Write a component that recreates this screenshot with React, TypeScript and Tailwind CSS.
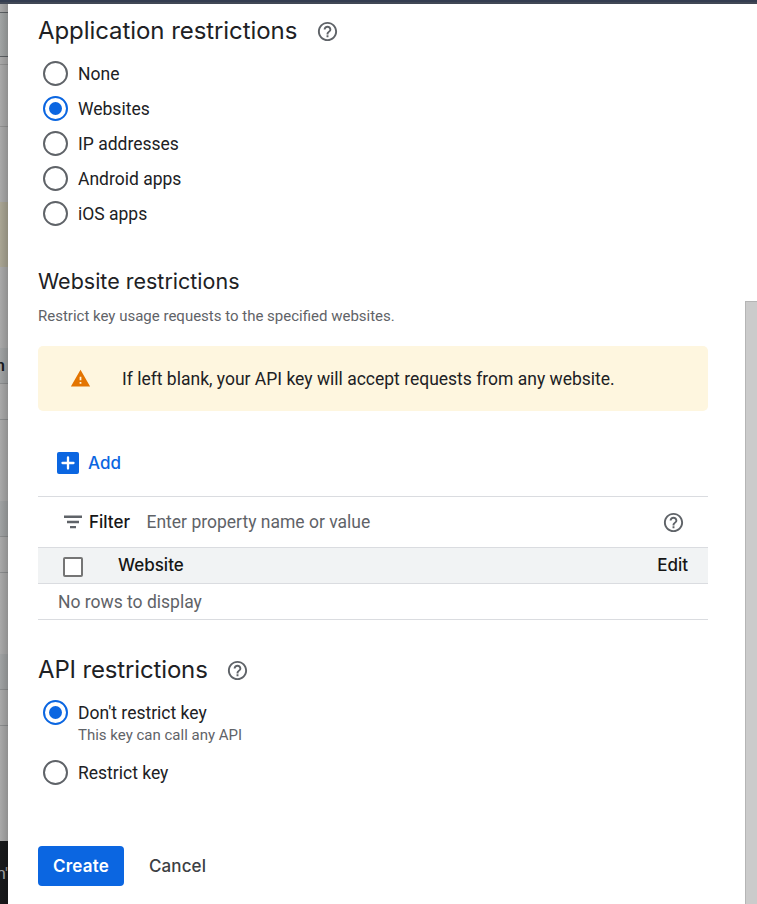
import React from "react";

const display = "font-['Google_Sans',Inter,sans-serif]";

function HelpIcon() {
  return (
    <svg viewBox="0 0 24 24" className="size-[23px] shrink-0 fill-[#5f6368]">
      <path d="M11 18h2v-2h-2v2zm1-16C6.48 2 2 6.48 2 12s4.48 10 10 10 10-4.48 10-10S17.52 2 12 2zm0 18c-4.41 0-8-3.59-8-8s3.59-8 8-8 8 3.59 8 8-3.59 8-8 8zm0-14c-2.21 0-4 1.79-4 4h2c0-1.1.9-2 2-2s2 .9 2 2c0 2-3 1.75-3 5h2c0-2.25 3-2.5 3-5 0-2.21-1.79-4-4-4z" />
    </svg>
  );
}

function Radio({ label, checked = false }: { label: string; checked?: boolean }) {
  return (
    <div className="flex h-[35px] items-center pl-[5px]" role="radio" aria-checked={checked}>
      <span
        className={`flex size-[25px] shrink-0 items-center justify-center rounded-full border-2 ${
          checked ? "border-[#0b66e1]" : "border-[#5f6368]"
        }`}
      >
        {checked && <span className="size-[13px] rounded-full bg-[#0b66e1]" />}
      </span>
      <span className="ml-[10px] pt-[2px] text-[17.5px] leading-none whitespace-nowrap">{label}</span>
    </div>
  );
}

const strip: [number, string][] = [
  [8, "#a9a9a9"], [1, "#5c6063"], [43, "#a1a4a4"], [1, "#5c6063"],
  [7, "#a9a9a9"], [1, "#929292"], [61, "#a9a9a9"], [1, "#929292"], [75, "#a9a9a9"],
  [65, "#a9a593"], [81, "#a9a9a9"], [35, "#9fa2a3"], [1, "#8b8d8e"], [35, "#a9a9a9"],
  [1, "#8b8d8e"], [81, "#a9a9a9"], [35, "#9fa2a3"], [1, "#8b8d8e"], [35, "#a9a9a9"],
  [1, "#8b8d8e"], [81, "#a9a9a9"], [35, "#9fa2a3"], [1, "#8b8d8e"], [35, "#a9a9a9"],
  [1, "#8b8d8e"], [115, "#a9a9a9"], [63, "#18191b"],
];

function Backdrop() {
  return (
    <div className="relative flex w-2 shrink-0 flex-col overflow-hidden">
      {strip.map(([height, backgroundColor], i) => (
        <div key={i} className="flex shrink-0 items-center justify-end" style={{ height, backgroundColor }}>
          {i === 11 && <span className="mr-[3px] text-[17px] font-medium text-[#15181c]">n</span>}
          {i === 26 && <span className="pt-[3px] text-[17px] text-[#a5a5a5]">n'</span>}
        </div>
      ))}
      <div className="absolute inset-0 bg-linear-to-r from-transparent to-black/15" />
    </div>
  );
}

export default function App() {
  return (
    <div className="flex h-[904px] w-[757px] flex-col overflow-hidden bg-white font-[Roboto,sans-serif] text-[#202124]">
      <div className="h-1 shrink-0 border-b-2 border-[#414855] bg-[#343d50]" />
      <div className="flex min-h-0 flex-1">
        <Backdrop />
        <main className="flex w-[737px] shrink-0 flex-col pl-[30px]">
          <div className="flex h-[52px] items-center gap-[18.5px] pt-[2px]">
            <h1 className={`${display} w-[259px] text-[24px] tracking-[-0.07px] whitespace-nowrap`}>Application restrictions</h1>
            <HelpIcon />
          </div>
          <div role="radiogroup">
            <Radio label="None" />
            <Radio label="Websites" checked />
            <Radio label="IP addresses" />
            <Radio label="Android apps" />
            <Radio label="iOS apps" />
          </div>

          <h2 className={`${display} mt-[35px] h-[30px] text-[21.5px] leading-[30px]`}>Website restrictions</h2>
          <p className="mt-[10px] h-5 text-[15px] leading-5 text-[#5f6368]">
            Restrict key usage requests to the specified websites.
          </p>
          <div className="mt-5 flex h-[65px] w-[670px] shrink-0 items-center rounded-[5px] bg-[#fef6df] pl-8">
            <svg viewBox="0 0 24 24" className="size-[21px] fill-[#e37400]">
              <path d="M1 21h22L12 2 1 21zm12-3h-2v-2h2v2zm0-4h-2v-4h2v4z" />
            </svg>
            <span className="ml-[31px] pt-[2px] text-[17.5px] whitespace-nowrap">
              If left blank, your API key will accept requests from any website.
            </span>
          </div>

          <button className={`${display} mt-[35px] flex h-[34px] items-center self-start pl-[19px] text-[17px] font-medium text-[#0b66e1]`}>
            <svg viewBox="0 0 22 22" className="size-[22px]">
              <rect width="22" height="22" rx="2" fill="#0b66e1" />
              <path d="M11 5.5v11M5.5 11h11" stroke="white" strokeWidth="2.3" strokeLinecap="round" />
            </svg>
            <span className="ml-[9px] pt-[2px]">Add</span>
          </button>

          <section className="mt-4 w-[670px] border-y border-[#dadce0]">
            <div className="flex h-[50px] items-center pl-[23px]">
              <svg viewBox="0 0 24 24" className="size-6 fill-[#5f6368]">
                <path d="M3 5.5h18V8H3zM6 10.8h12v2.4H6zM9 16h6v2.3H9z" />
              </svg>
              <span className={`${display} ml-1 w-[57.5px] pt-[2px] text-[17px] font-medium text-[#161616]`}>Filter</span>
              <span className="text-[17.5px] text-[#5f6368]">Enter property name or value</span>
              <span className="mr-[23.5px] ml-auto">
                <HelpIcon />
              </span>
            </div>
            <div className="flex h-[37px] items-center border-y border-[#dadce0] bg-[#f1f3f4] pl-[25px] text-[17px] text-[#161616]">
              <span className="mt-[3px] size-5 rounded-[2px] border-2 border-[#757575] bg-white" />
              <span className={`${display} ml-[35px] font-medium`}>Website</span>
              <span className={`${display} mr-5 ml-auto font-medium`}>Edit</span>
            </div>
            <div className="flex h-[35px] items-center pt-[2px] pl-5 text-[17.5px] text-[#5f6368]">No rows to display</div>
          </section>

          <div className="mt-[30px] flex h-10 items-center gap-[18.5px]">
            <h1 className={`${display} w-[169px] text-[24px] tracking-[-0.15px] whitespace-nowrap`}>API restrictions</h1>
            <HelpIcon />
          </div>
          <div role="radiogroup" className="mt-[5px]">
            <Radio label="Don't restrict key" checked />
            <p className="-mt-[5px] mb-[10px] h-5 pl-10 text-[15px] leading-5 text-[#5f6368]">This key can call any API</p>
            <Radio label="Restrict key" />
          </div>
          <div className={`${display} mt-14 flex items-center text-[17px] font-medium`}>
            <button className="h-10 w-[86px] rounded-[4px] bg-[#0b66e1] pt-[2px] font-semibold tracking-[0.2px] text-white">Create</button>
            <button className="ml-[25px] pt-[2px] tracking-[0.1px] text-[#3c4043]">Cancel</button>
          </div>
        </main>
        <div className="mt-[297px] w-3 shrink-0 border-t border-l border-[#b5b5b5] bg-[#cbcbcb]" />
      </div>
    </div>
  );
}
